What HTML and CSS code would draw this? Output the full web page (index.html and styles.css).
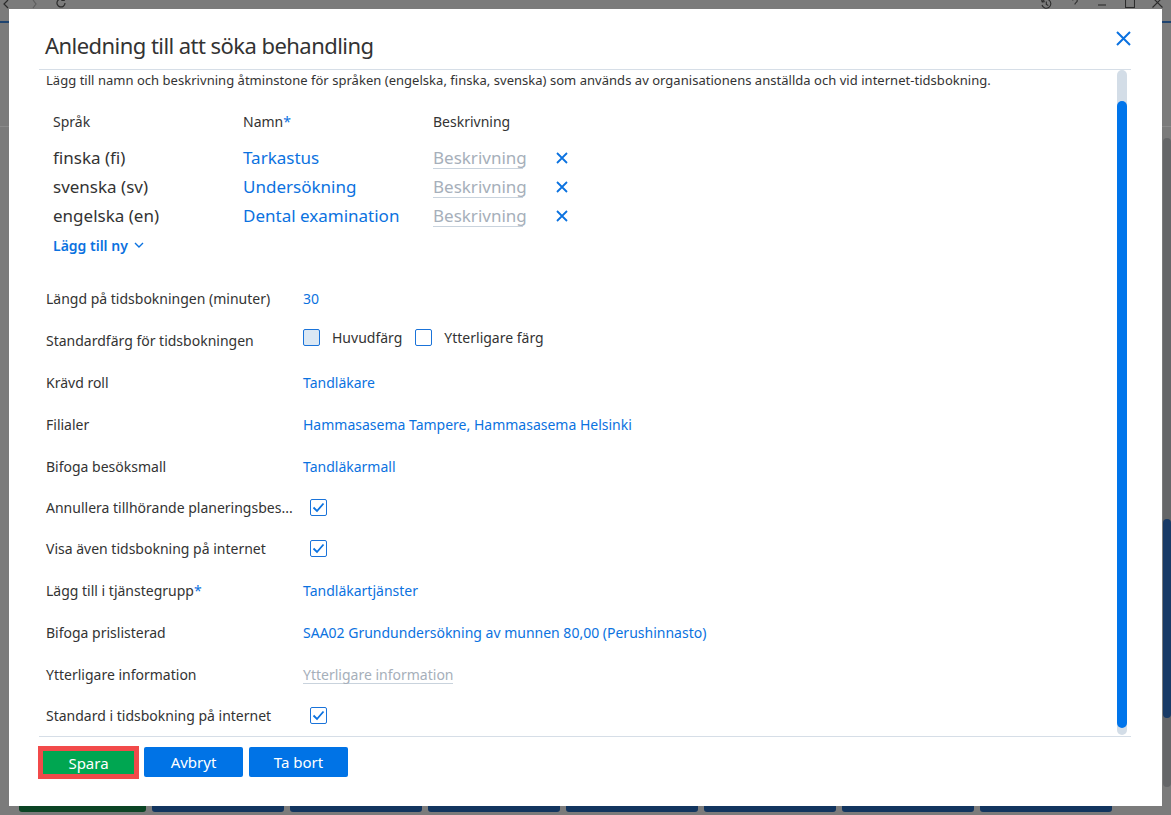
FILE: index.html
```html
<!DOCTYPE html>
<html lang="sv">
  <head>
    <meta charset="UTF-8" />
    <meta name="viewport" content="width=device-width, initial-scale=1.0" />
    <title>Anledning till att söka behandling</title>
    <link rel="stylesheet" href="styles.css">
  </head>
  <body>
    <!-- sidan bakom dialogen, nedtonad -->
    <div class="app">
      <div class="app-top">
        <div class="nav-icons">
          <svg class="ic-back" width="6" height="10" viewBox="0 0 6 10"><polyline points="5,1 1,5 5,9" fill="none" stroke="#2c2c2c" stroke-width="1.2" /></svg>
          <svg class="ic-fwd" width="5" height="10" viewBox="0 0 5 10"><polyline points="1,1 4,5 1,9" fill="none" stroke="#5e5e5e" stroke-width="1.2" /></svg>
          <svg class="ic-reload" width="12" height="12" viewBox="0 0 12 12"><path d="M10 6a4 4 0 1 1-1.2-2.9" fill="none" stroke="#2c2c2c" stroke-width="1.2" /><polyline points="9.2,0.5 9.2,3.4 6.3,3.4" fill="none" stroke="#2c2c2c" stroke-width="1.2" /></svg>
        </div>
        <div class="win-icons">
          <svg class="ic-hist" width="12" height="12" viewBox="0 0 12 12"><path d="M2.2 4a4.5 4.5 0 1 1-0.2 3" fill="none" stroke="#2c2c2c" stroke-width="1.1" /><polyline points="1.5,1.5 2.2,4 4.7,3.6" fill="none" stroke="#2c2c2c" stroke-width="1.1" /><polyline points="6.3,3.5 6.3,6.5 8.3,7.5" fill="none" stroke="#2c2c2c" stroke-width="1.1" /></svg>
          <svg class="ic-help" width="6" height="10" viewBox="0 0 6 10"><path d="M0.8 2.6a2.2 2.2 0 1 1 3.2 2c-0.8 0.5-1.1 1-1.1 2" fill="none" stroke="#2c2c2c" stroke-width="1.1" /></svg>
          <svg class="ic-min" width="8" height="10" viewBox="0 0 8 10"><line x1="0" y1="7" x2="8" y2="7" stroke="#2c2c2c" stroke-width="1.1" /></svg>
          <svg class="ic-max" width="10" height="10" viewBox="0 0 10 10"><rect x="0.5" y="-2" width="9" height="11.5" fill="none" stroke="#2c2c2c" stroke-width="1.1" /></svg>
          <svg class="ic-close" width="11" height="10" viewBox="0 0 11 10"><path d="M0.5 -0.5l10 10M10.5 -0.5l-10 10" stroke="#2c2c2c" stroke-width="1.1" /></svg>
        </div>
      </div>
      <div class="app-main">
        <div class="app-head"></div>
        <div class="app-content">
          <div class="app-scroll"><div class="app-thumb"></div></div>
        </div>
      </div>
      <div class="app-bottom">
        <span class="app-btn green"></span>
        <span class="app-btn"></span>
        <span class="app-btn"></span>
        <span class="app-btn"></span>
        <span class="app-btn"></span>
        <span class="app-btn"></span>
        <span class="app-btn"></span>
        <span class="app-btn"></span>
      </div>
    </div>

    <div class="modal">
      <div class="modal-head">
        <h1>Anledning till att söka behandling</h1>
        <button class="close-btn" aria-label="Stäng">
          <svg width="15" height="15" viewBox="0 0 15 15"><path d="M1 1l13 13M14 1L1 14" stroke="#0b72e0" stroke-width="2" /></svg>
        </button>
      </div>

      <div class="modal-body">
        <div class="modal-content">
          <p class="intro">Lägg till namn och beskrivning åtminstone för språken (engelska, finska, svenska) som används av organisationens anställda och vid internet-tidsbokning.</p>

          <div class="lang-table">
            <div class="lang-row lang-head">
              <span>Språk</span>
              <span>Namn<span class="req">*</span></span>
              <span>Beskrivning</span>
              <span></span>
            </div>
            <div class="lang-row">
              <span>finska (fi)</span>
              <span class="link">Tarkastus</span>
              <span><span class="placeholder">Beskrivning</span></span>
              <svg class="remove" width="12" height="12" viewBox="0 0 12 12"><path d="M1 1l10 10M11 1L1 11" stroke="#0b72e0" stroke-width="1.8" /></svg>
            </div>
            <div class="lang-row">
              <span>svenska (sv)</span>
              <span class="link">Undersökning</span>
              <span><span class="placeholder">Beskrivning</span></span>
              <svg class="remove" width="12" height="12" viewBox="0 0 12 12"><path d="M1 1l10 10M11 1L1 11" stroke="#0b72e0" stroke-width="1.8" /></svg>
            </div>
            <div class="lang-row">
              <span>engelska (en)</span>
              <span class="link">Dental examination</span>
              <span><span class="placeholder">Beskrivning</span></span>
              <svg class="remove" width="12" height="12" viewBox="0 0 12 12"><path d="M1 1l10 10M11 1L1 11" stroke="#0b72e0" stroke-width="1.8" /></svg>
            </div>
          </div>

          <button class="add-new">
            Lägg till ny
            <svg width="10" height="6" viewBox="0 0 10 6"><polyline points="1,1 5,5 9,1" fill="none" stroke="#0b72e0" stroke-width="1.4" /></svg>
          </button>

          <div class="form">
            <div class="form-row">
              <span class="label">Längd på tidsbokningen (minuter)</span>
              <span class="value">30</span>
            </div>
            <div class="form-row">
              <span class="label">Standardfärg för tidsbokningen</span>
              <div class="color-opts">
                <label class="color-opt"><span class="box box-main"></span>Huvudfärg</label>
                <label class="color-opt"><span class="box"></span>Ytterligare färg</label>
              </div>
            </div>
            <div class="form-row">
              <span class="label">Krävd roll</span>
              <span class="value">Tandläkare</span>
            </div>
            <div class="form-row">
              <span class="label">Filialer</span>
              <span class="value">Hammasasema Tampere, Hammasasema Helsinki</span>
            </div>
            <div class="form-row">
              <span class="label">Bifoga besöksmall</span>
              <span class="value">Tandläkarmall</span>
            </div>
            <div class="form-row check-row">
              <span class="label">Annullera tillhörande planeringsbes...</span>
              <span class="box checked"><svg width="13" height="11" viewBox="0 0 13 11"><polyline points="1.5,5.5 5,9 11.5,1.5" fill="none" stroke="#0b72e0" stroke-width="1.8" /></svg></span>
            </div>
            <div class="form-row check-row tall">
              <span class="label">Visa även tidsbokning på internet</span>
              <span class="box checked"><svg width="13" height="11" viewBox="0 0 13 11"><polyline points="1.5,5.5 5,9 11.5,1.5" fill="none" stroke="#0b72e0" stroke-width="1.8" /></svg></span>
            </div>
            <div class="form-row">
              <span class="label">Lägg till i tjänstegrupp<span class="req">*</span></span>
              <span class="value">Tandläkartjänster</span>
            </div>
            <div class="form-row">
              <span class="label">Bifoga prislisterad</span>
              <span class="value">SAA02 Grundundersökning av munnen 80,00 (Perushinnasto)</span>
            </div>
            <div class="form-row">
              <span class="label">Ytterligare information</span>
              <span><span class="placeholder small">Ytterligare information</span></span>
            </div>
            <div class="form-row check-row">
              <span class="label">Standard i tidsbokning på internet</span>
              <span class="box checked"><svg width="13" height="11" viewBox="0 0 13 11"><polyline points="1.5,5.5 5,9 11.5,1.5" fill="none" stroke="#0b72e0" stroke-width="1.8" /></svg></span>
            </div>
          </div>
        </div>
        <div class="scrollbar"><div class="scroll-thumb"></div></div>
      </div>

      <div class="modal-foot">
        <button class="btn btn-save">Spara</button>
        <button class="btn">Avbryt</button>
        <button class="btn">Ta bort</button>
      </div>
    </div>
  </body>
</html>
```

FILE: styles.css
```css
body {
  margin: 0;
  font-family: "Noto Sans", "Open Sans", sans-serif;
  background-color: #7b7b7b;
  color: #333;
  height: 815px;
  overflow: hidden;
  position: relative;
}

/* bakgrundssidan */
.app {
  height: 815px;
  display: flex;
  flex-direction: column;
}
.app-top {
  height: 21px;
  border-bottom: 2px solid #1f4470;
  display: flex;
  justify-content: space-between;
  align-items: flex-start;
}
.nav-icons,
.win-icons {
  display: flex;
  align-items: flex-start;
}
.nav-icons svg {
  margin-top: -1px;
}
.ic-back {
  margin-left: 3px;
}
.ic-fwd {
  margin-left: 23px;
}
.ic-reload {
  margin-left: 18px;
  margin-top: -3px !important;
}
.win-icons {
  margin-right: 8px;
}
.win-icons svg {
  margin-top: -2px;
}
.ic-help,
.ic-min {
  margin-left: 20px;
}
.ic-max {
  margin-left: 19px;
}
.ic-close {
  margin-left: 17px;
}
.app-main {
  flex: 1;
  display: flex;
  flex-direction: column;
}
.app-head {
  height: 103px;
  border-bottom: 1px solid #8a8a8a;
}
.app-content {
  flex: 1;
  display: flex;
  justify-content: flex-end;
}
.app-scroll {
  width: 8px;
  margin: 11px 0 16px;
  background-color: #656668;
  border-radius: 4px;
}
.app-thumb {
  margin-top: 381px;
  height: 199px;
  background-color: #183a66;
  border-radius: 4px;
}
.app-bottom {
  height: 12px;
  box-sizing: border-box;
  padding: 0 0 3px 19px;
  display: flex;
  gap: 6px;
}
.app-btn {
  flex: 0 0 132px;
  background-color: #12355f;
  border-radius: 0 0 3px 3px;
}
.app-btn.green {
  flex-basis: 127px;
  background-color: #0b4424;
}

/* dialog */
.modal {
  position: absolute;
  left: 9px;
  top: 9px;
  width: 1153px;
  height: 797px;
  box-sizing: border-box;
  padding: 0 31px 0 30px;
  background-color: white;
  display: flex;
  flex-direction: column;
}
.modal-head {
  height: 61px;
  box-sizing: border-box;
  border-bottom: 1px solid #d6dee7;
  display: flex;
  justify-content: space-between;
  align-items: flex-start;
}
h1 {
  margin: 21px 0 0;
  padding-left: 6px;
  font-size: 22px;
  font-weight: 400;
  letter-spacing: -0.55px;
  line-height: 30px;
  color: #333;
}
.close-btn {
  margin-top: 22px;
  padding: 0;
  border: none;
  background: none;
  width: 15px;
  height: 15px;
  cursor: pointer;
}
.close-btn svg {
  display: block;
}
.modal-body {
  flex: 1;
  display: flex;
  min-height: 0;
}
.modal-content {
  flex: 1;
  padding-left: 7px;
  overflow: hidden;
}
.scrollbar {
  width: 10px;
  margin: 0 4px 1px 0;
  background-color: #d3dde7;
  border-radius: 5px;
}
.scroll-thumb {
  margin-top: 31px;
  height: 627px;
  background-color: #0075eb;
  border-radius: 5px;
}

.intro {
  margin: 0;
  padding-top: 1px;
  font-size: 13px;
  letter-spacing: 0.03px;
  line-height: 18px;
}

/* språktabell */
.lang-table {
  margin: 22px 0 0 7px;
}
.lang-row {
  display: grid;
  grid-template-columns: 190px 190px 123px 12px;
  align-items: center;
  height: 29px;
  font-size: 17px;
}
.lang-head {
  height: 20px;
  font-size: 14px;
  margin-bottom: 12px;
}
.lang-row .link {
  color: #0b72e0;
}
.req {
  color: #0b72e0;
}
.placeholder {
  display: inline-block;
  width: 90px;
  line-height: 20px;
  color: #a6afba;
  border-bottom: 1px solid #c9d3dd;
  white-space: nowrap;
}
.placeholder.small {
  width: 150px;
  line-height: 16px;
  font-size: 14px;
}
.remove {
  display: block;
}
.add-new {
  margin: 5px 0 0 7px;
  padding: 0;
  height: 20px;
  border: none;
  background: none;
  display: flex;
  align-items: center;
  gap: 6px;
  font-family: inherit;
  font-size: 14px;
  font-weight: 600;
  color: #0b72e0;
  cursor: pointer;
}

/* formulär */
.form {
  margin-top: 22px;
}
.form-row {
  display: grid;
  grid-template-columns: 257px 1fr;
  align-items: center;
  height: 42px;
  font-size: 14px;
}
.form-row.check-row {
  height: 40px;
}
.form-row.check-row.tall {
  height: 42px;
}
.label {
  white-space: nowrap;
}
.value {
  color: #0b72e0;
}
.color-opts {
  display: flex;
  align-items: center;
  gap: 13px;
  margin-bottom: 6px;
}
.color-opt {
  display: flex;
  align-items: center;
  gap: 12px;
}
.box {
  width: 17px;
  height: 17px;
  box-sizing: border-box;
  border: 1px solid #1a73d9;
  border-radius: 2px;
  background-color: white;
  display: flex;
  justify-content: center;
  align-items: center;
}
.box-main {
  background-color: #dbe8f4;
}
.box.checked {
  margin-left: 7px;
  border-width: 1.5px;
}

/* knappar */
.modal-foot {
  height: 70px;
  box-sizing: border-box;
  border-top: 1px solid #d6dee7;
  padding-top: 9px;
  display: flex;
  align-items: flex-start;
  gap: 5px;
}
.btn {
  width: 99px;
  height: 30px;
  margin-top: 1px;
  border: none;
  border-radius: 2px;
  background-color: #0073e6;
  color: white;
  font-family: inherit;
  font-size: 15px;
  cursor: pointer;
}
.btn + .btn + .btn {
  margin-left: 1px;
}
.btn-save {
  width: 101px;
  height: 33px;
  margin: 0 0 0 -1px;
  border: 5px solid #f24a4a;
  border-radius: 0;
  background-color: #00a651;
}
```
